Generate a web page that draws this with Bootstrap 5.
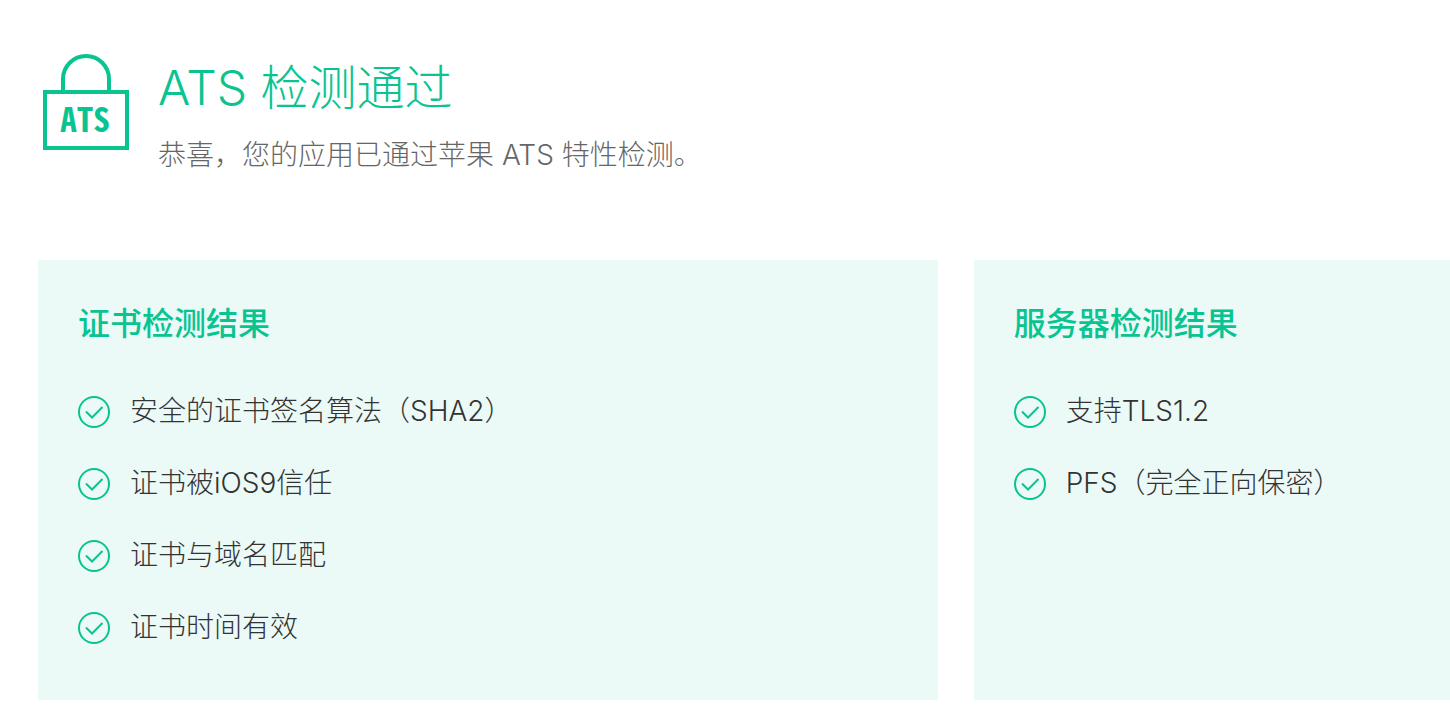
<!DOCTYPE html>
<html lang="zh-CN">
<head>
<meta charset="utf-8">
<meta name="viewport" content="width=device-width, initial-scale=1">
<title>ATS 检测通过</title>
<link href="https://cdn.jsdelivr.net/npm/bootstrap@5.3.0/dist/css/bootstrap.min.css" rel="stylesheet">
<style>
  :root { --ats-green: #09c491; }
  body { font-family: Inter, "Noto Sans CJK SC", sans-serif; font-weight: 300; color: #333; background: #fff; }
  .ats-page { padding: 54px 0 28px 38px; }
  .ats-head { gap: 28px; min-height: 206px; padding-left: 4px; }
  .ats-lock { stroke: var(--ats-green); }
  .ats-lock text { font: 700 33px "Noto Sans Mono CJK SC", "Noto Sans CJK SC", sans-serif; fill: var(--ats-green); stroke: none; }
  .ats-title { font-size: 48px; line-height: 68px; font-weight: 300; color: var(--ats-green); }
  .ats-desc { font-size: 28px; line-height: 40px; color: #666; margin-top: 13px; }
  .ats-panels { display: grid; gap: 36px; }
  .ats-panel { background: #ebfaf7; padding: 40px; }
  .ats-panel h2 { font-size: 32px; line-height: 48px; font-weight: 500; color: var(--ats-green); margin-bottom: 44px; }
  .ats-list { gap: 34px; }
  .ats-list li { font-size: 28px; line-height: 38px; gap: 20px; }
  .ats-list svg { width: 32px; height: 32px; margin-top: 4px; flex: none; }
  @media (min-width: 992px) {
    .ats-panels { grid-template-columns: minmax(0, 17fr) minmax(0, 9fr); }
    .ats-panel { min-height: 440px; }
  }
</style>
</head>
<body>
<svg width="0" height="0" class="position-absolute" aria-hidden="true">
  <symbol id="ok" viewBox="0 0 32 32"><g fill="none" stroke="#09c491" stroke-width="2"><circle cx="16" cy="16" r="15"/><path d="M8 15.500l6 6L24.500 11"/></g></symbol>
</svg>
<main class="ats-page">
  <header class="ats-head d-flex align-items-start">
    <svg class="ats-lock flex-shrink-0" width="88" height="98" viewBox="0 0 88 98" fill="none" stroke-width="4" role="img" aria-label="ATS">
      <path d="M3 38h82v56H3zM21 38V25a23 23 0 0 1 46 0v13"/>
      <text x="43" y="78" text-anchor="middle">ATS</text>
    </svg>
    <div>
      <h1 class="ats-title mb-0">ATS 检测通过</h1>
      <p class="ats-desc mb-0">恭喜，您的应用已通过苹果 ATS 特性检测。</p>
    </div>
  </header>
  <div class="ats-panels">
    <section class="ats-panel">
      <h2>证书检测结果</h2>
      <ul class="ats-list list-unstyled d-flex flex-column mb-0">
        <li class="d-flex align-items-start"><svg aria-hidden="true"><use href="#ok"/></svg>安全的证书签名算法（SHA2）</li>
        <li class="d-flex align-items-start"><svg aria-hidden="true"><use href="#ok"/></svg>证书被iOS9信任</li>
        <li class="d-flex align-items-start"><svg aria-hidden="true"><use href="#ok"/></svg>证书与域名匹配</li>
        <li class="d-flex align-items-start"><svg aria-hidden="true"><use href="#ok"/></svg>证书时间有效</li>
      </ul>
    </section>
    <section class="ats-panel">
      <h2>服务器检测结果</h2>
      <ul class="ats-list list-unstyled d-flex flex-column mb-0">
        <li class="d-flex align-items-start"><svg aria-hidden="true"><use href="#ok"/></svg>支持TLS1.2</li>
        <li class="d-flex align-items-start"><svg aria-hidden="true"><use href="#ok"/></svg>PFS（完全正向保密）</li>
      </ul>
    </section>
  </div>
</main>
<script src="https://cdn.jsdelivr.net/npm/bootstrap@5.3.0/dist/js/bootstrap.bundle.min.js"></script>
</body>
</html>
